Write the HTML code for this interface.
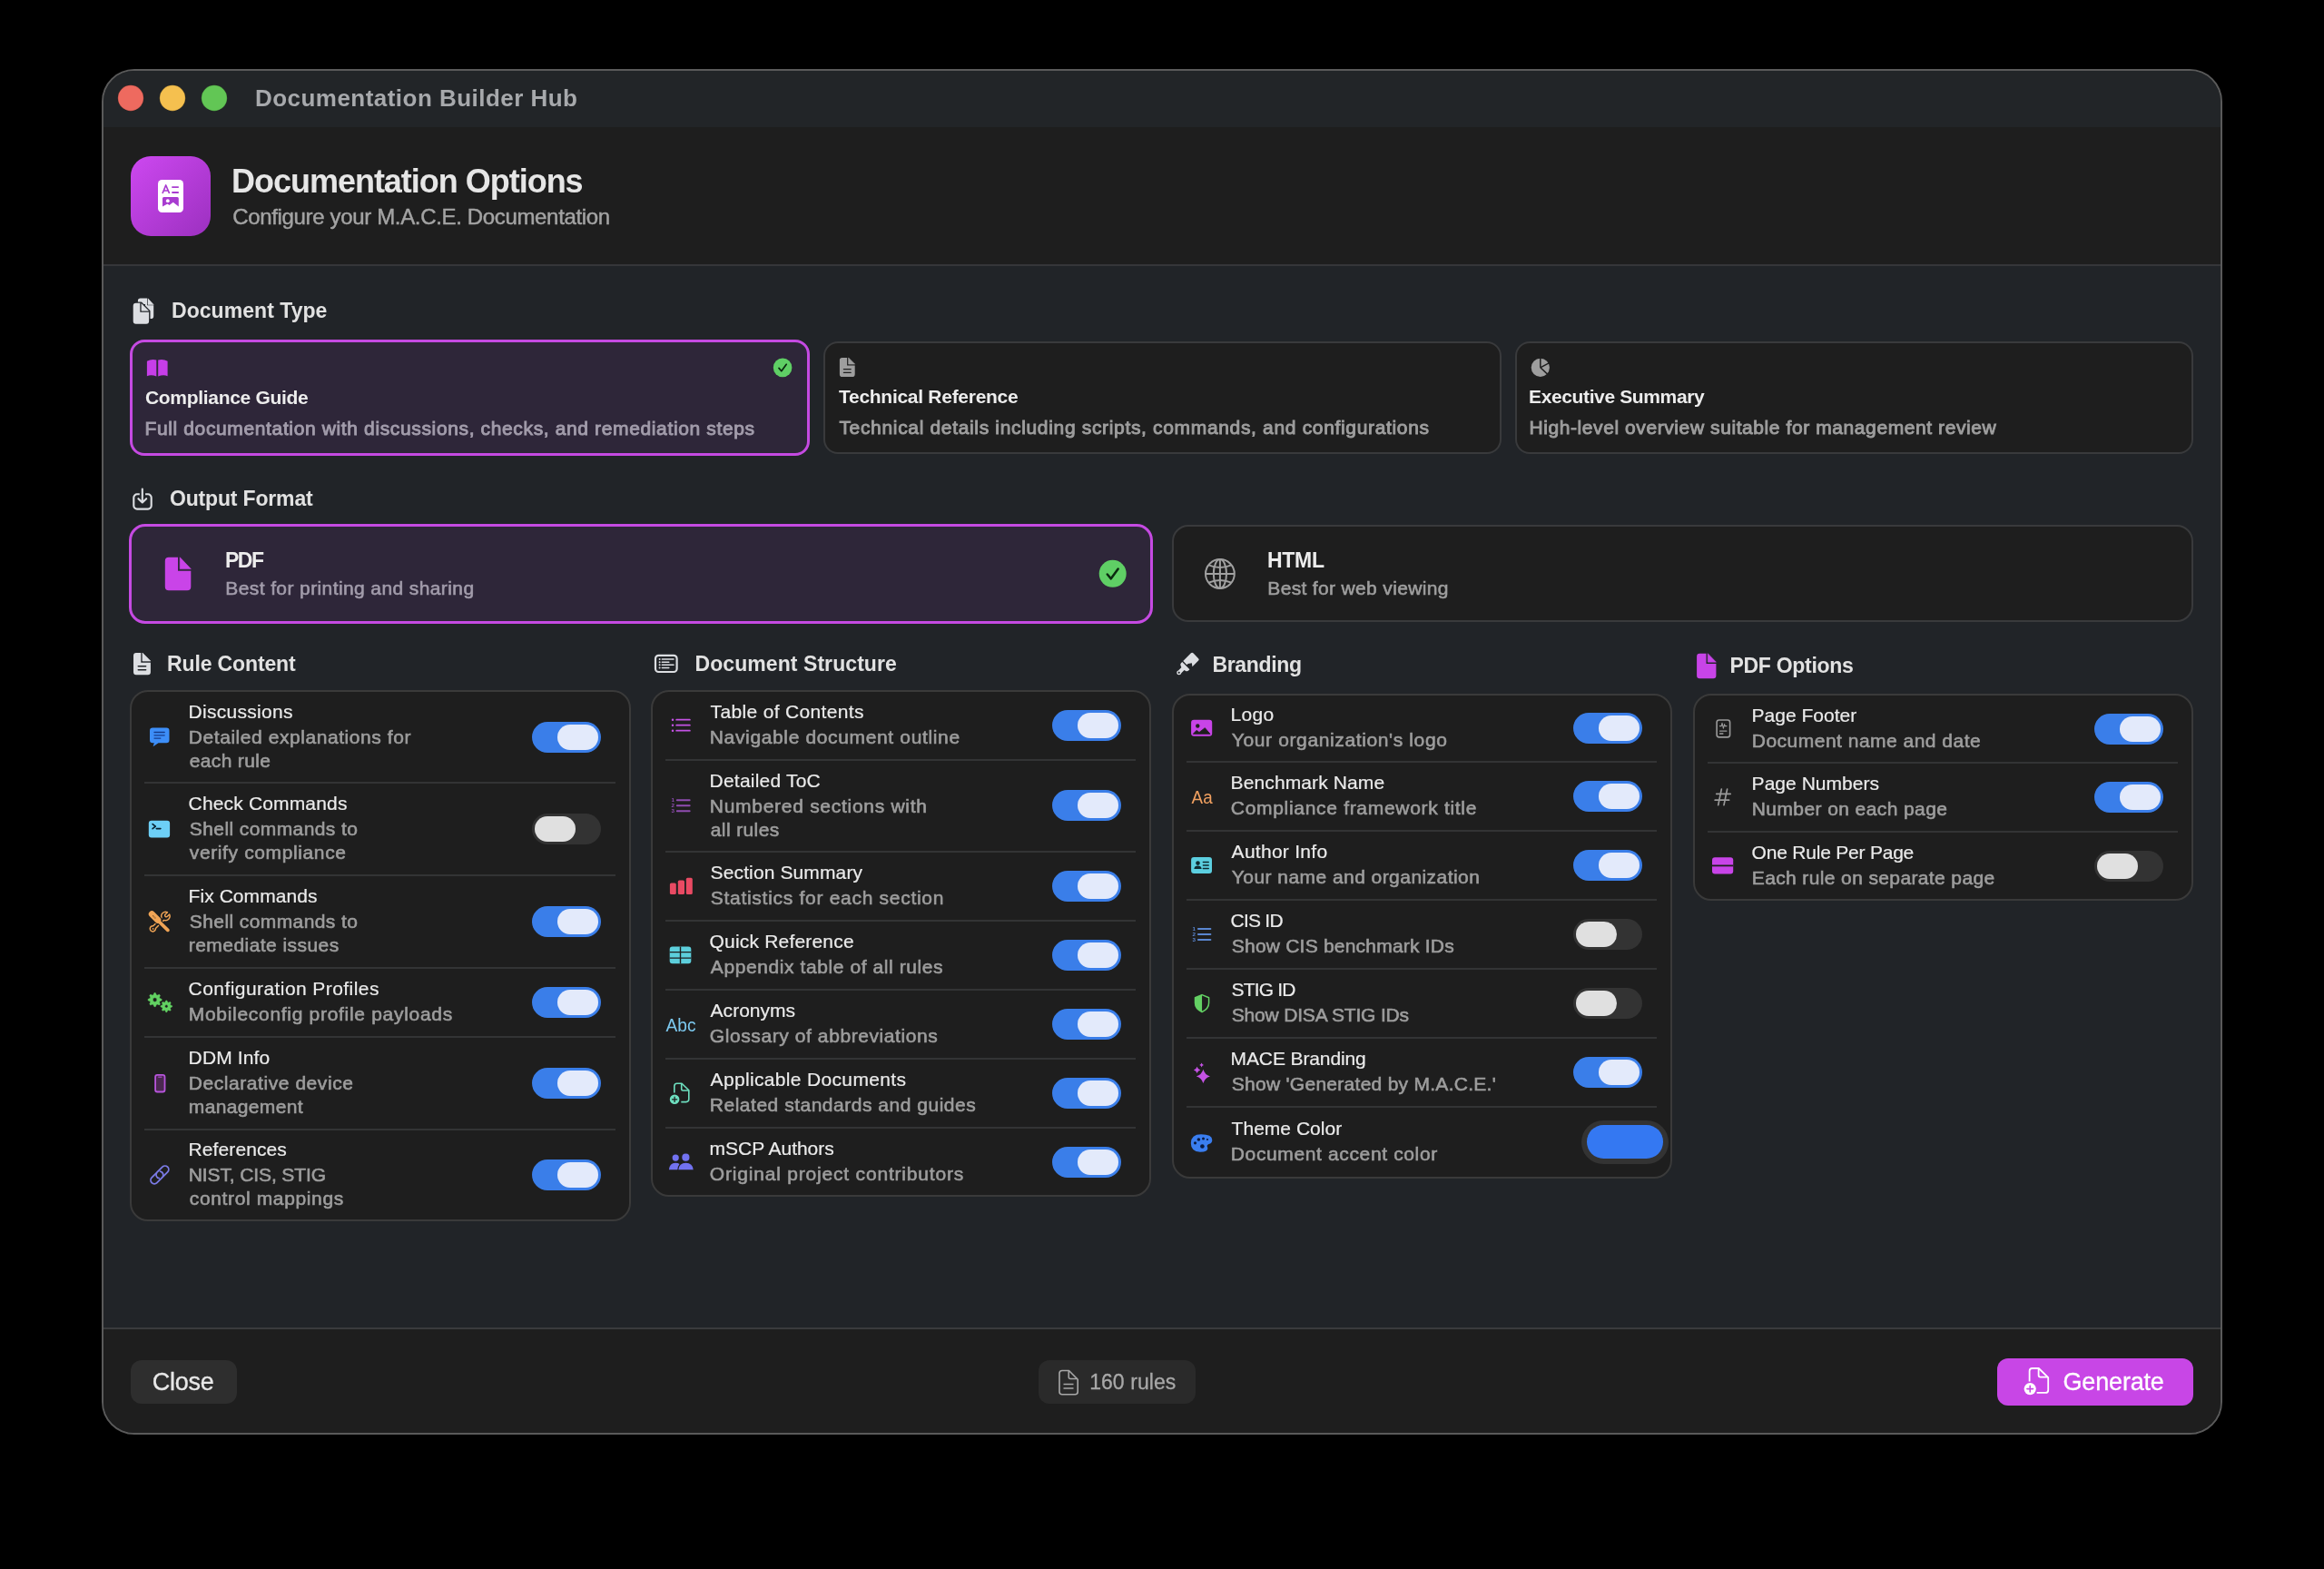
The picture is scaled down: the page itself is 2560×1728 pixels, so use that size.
<!DOCTYPE html>
<html><head><meta charset="utf-8"><style>
html,body{margin:0;padding:0;}
body{width:2560px;height:1728px;background:#000;position:relative;overflow:hidden;font-family:"Liberation Sans", sans-serif;}
.win{position:absolute;border:2px solid #5a5a5a;border-radius:36px;background:#212428;overflow:hidden;}
.b{position:absolute;}
.t{position:absolute;white-space:nowrap;}
#L{position:absolute;left:0;top:0;width:2560px;height:1728px;will-change:transform;}
svg.ov{position:absolute;left:0;top:0;overflow:visible;}
</style></head><body>
<div id="L"><div class="win" style="left:112px;top:76px;width:2332px;height:1500px;"><div class="b" style="left:0;top:0;width:100%;height:62px;background:#222528"></div><div class="b" style="left:0;top:62px;width:100%;height:151px;background:#1e1e1e"></div><div class="b" style="left:0;top:213px;width:100%;height:2px;background:#353639"></div><div class="b" style="left:0;top:1384px;width:100%;height:2px;background:#3a3b3d"></div><div class="b" style="left:0;top:1386px;width:100%;height:200px;background:#1e1e1e"></div></div><div class="t" style="left:281.00px;top:90.99px;font-size:26px;line-height:34px;color:#a7a9ac;font-weight:700;letter-spacing:0.463px;">Documentation Builder Hub</div><div class="t" style="left:255.00px;top:176.03px;font-size:36px;line-height:47px;color:#e6e6e6;font-weight:700;letter-spacing:-1.018px;">Documentation Options</div><div class="t" style="left:256.23px;top:223.18px;font-size:24px;line-height:31px;color:#a3a3a3;font-weight:400;letter-spacing:-0.341px;-webkit-text-stroke:0.45px #a3a3a3;">Configure your M.A.C.E. Documentation</div><div class="t" style="left:189.00px;top:327.03px;font-size:23px;line-height:30px;color:#e2e2e2;font-weight:700;letter-spacing:0.048px;">Document Type</div><div class="t" style="left:187.00px;top:534.03px;font-size:23px;line-height:30px;color:#e2e2e2;font-weight:700;letter-spacing:-0.170px;">Output Format</div><div class="t" style="left:184.00px;top:716.03px;font-size:23px;line-height:30px;color:#e2e2e2;font-weight:700;letter-spacing:-0.131px;">Rule Content</div><div class="t" style="left:765.50px;top:716.03px;font-size:23px;line-height:30px;color:#e2e2e2;font-weight:700;letter-spacing:0.071px;">Document Structure</div><div class="t" style="left:1335.40px;top:717.03px;font-size:23px;line-height:30px;color:#e2e2e2;font-weight:700;letter-spacing:-0.327px;">Branding</div><div class="t" style="left:1905.50px;top:718.03px;font-size:23px;line-height:30px;color:#e2e2e2;font-weight:700;letter-spacing:-0.298px;">PDF Options</div><div class="b" style="left:143px;top:374px;width:749px;height:128px;box-sizing:border-box;border:3px solid #c54ae2;border-radius:16px;background:#2e2639"></div><div class="b" style="left:907px;top:376px;width:747px;height:124px;box-sizing:border-box;border:2px solid #393a3c;border-radius:16px;background:#1e1e1e"></div><div class="b" style="left:1669px;top:376px;width:747px;height:124px;box-sizing:border-box;border:2px solid #393a3c;border-radius:16px;background:#1e1e1e"></div><div class="t" style="left:160.00px;top:424.22px;font-size:21px;line-height:27px;color:#ededed;font-weight:700;letter-spacing:-0.312px;">Compliance Guide</div><div class="t" style="left:159.45px;top:457.62px;font-size:21px;line-height:27px;color:#a29cab;font-weight:400;letter-spacing:0.635px;-webkit-text-stroke:0.9px #a29cab;">Full documentation with discussions, checks, and remediation steps</div><div class="t" style="left:924.00px;top:423.22px;font-size:21px;line-height:27px;color:#ededed;font-weight:700;letter-spacing:-0.279px;">Technical Reference</div><div class="t" style="left:924.45px;top:456.82px;font-size:21px;line-height:27px;color:#9e9e9e;font-weight:400;letter-spacing:0.666px;-webkit-text-stroke:0.9px #9e9e9e;">Technical details including scripts, commands, and configurations</div><div class="t" style="left:1684.00px;top:423.22px;font-size:21px;line-height:27px;color:#ededed;font-weight:700;letter-spacing:-0.370px;">Executive Summary</div><div class="t" style="left:1684.45px;top:456.82px;font-size:21px;line-height:27px;color:#9e9e9e;font-weight:400;letter-spacing:0.586px;-webkit-text-stroke:0.9px #9e9e9e;">High-level overview suitable for management review</div><div class="b" style="left:142px;top:577px;width:1128px;height:110px;box-sizing:border-box;border:3px solid #c54ae2;border-radius:18px;background:#2e2639"></div><div class="b" style="left:1291px;top:578px;width:1125px;height:107px;box-sizing:border-box;border:2px solid #393a3c;border-radius:18px;background:#1e1e1e"></div><div class="t" style="left:248.00px;top:602.03px;font-size:23px;line-height:30px;color:#ededed;font-weight:700;letter-spacing:-1.475px;">PDF</div><div class="t" style="left:248.30px;top:633.72px;font-size:21px;line-height:27px;color:#a29cab;font-weight:400;letter-spacing:0.397px;-webkit-text-stroke:0.6px #a29cab;">Best for printing and sharing</div><div class="t" style="left:1396.00px;top:602.03px;font-size:23px;line-height:30px;color:#ededed;font-weight:700;letter-spacing:-0.273px;">HTML</div><div class="t" style="left:1396.30px;top:634.22px;font-size:21px;line-height:27px;color:#9e9e9e;font-weight:400;letter-spacing:0.342px;-webkit-text-stroke:0.6px #9e9e9e;">Best for web viewing</div><div class="b" style="left:143px;top:760px;width:552px;height:585px;box-sizing:border-box;border:2px solid #3a3a3a;border-radius:20px;background:#1e1e1e"></div><div class="t" style="left:207.60px;top:769.87px;font-size:21px;line-height:27px;color:#ebebeb;font-weight:400;letter-spacing:0.277px;-webkit-text-stroke:0.2px #ebebeb;">Discussions</div><div class="t" style="left:207.80px;top:797.97px;font-size:21px;line-height:27px;color:#9d9d9d;font-weight:400;letter-spacing:0.560px;-webkit-text-stroke:0.6px #9d9d9d;">Detailed explanations for</div><div class="t" style="left:208.80px;top:823.97px;font-size:21px;line-height:27px;color:#9d9d9d;font-weight:400;letter-spacing:0.336px;-webkit-text-stroke:0.6px #9d9d9d;">each rule</div><div class="b" style="left:586px;top:794.5px;width:76px;height:34px;border-radius:17px;background:#3a7ee9"></div><div class="b" style="left:614px;top:797.5px;width:45px;height:28px;border-radius:14px;background:#e3eafb"></div><div class="b" style="left:159px;top:861px;width:519px;height:2px;background:#333435"></div><div class="t" style="left:207.60px;top:871.37px;font-size:21px;line-height:27px;color:#ebebeb;font-weight:400;letter-spacing:0.159px;-webkit-text-stroke:0.2px #ebebeb;">Check Commands</div><div class="t" style="left:208.80px;top:899.47px;font-size:21px;line-height:27px;color:#9d9d9d;font-weight:400;letter-spacing:0.406px;-webkit-text-stroke:0.6px #9d9d9d;">Shell commands to</div><div class="t" style="left:208.80px;top:925.47px;font-size:21px;line-height:27px;color:#9d9d9d;font-weight:400;letter-spacing:0.622px;-webkit-text-stroke:0.6px #9d9d9d;">verify compliance</div><div class="b" style="left:586px;top:896.0px;width:76px;height:34px;border-radius:17px;background:#333333"></div><div class="b" style="left:589px;top:899.0px;width:45px;height:28px;border-radius:14px;background:#e0e0e0"></div><div class="b" style="left:159px;top:963px;width:519px;height:2px;background:#333435"></div><div class="t" style="left:207.60px;top:973.37px;font-size:21px;line-height:27px;color:#ebebeb;font-weight:400;letter-spacing:0.055px;-webkit-text-stroke:0.2px #ebebeb;">Fix Commands</div><div class="t" style="left:208.80px;top:1001.47px;font-size:21px;line-height:27px;color:#9d9d9d;font-weight:400;letter-spacing:0.406px;-webkit-text-stroke:0.6px #9d9d9d;">Shell commands to</div><div class="t" style="left:207.80px;top:1027.47px;font-size:21px;line-height:27px;color:#9d9d9d;font-weight:400;letter-spacing:0.444px;-webkit-text-stroke:0.6px #9d9d9d;">remediate issues</div><div class="b" style="left:586px;top:998.0px;width:76px;height:34px;border-radius:17px;background:#3a7ee9"></div><div class="b" style="left:614px;top:1001.0px;width:45px;height:28px;border-radius:14px;background:#e3eafb"></div><div class="b" style="left:159px;top:1065px;width:519px;height:2px;background:#333435"></div><div class="t" style="left:207.60px;top:1075.37px;font-size:21px;line-height:27px;color:#ebebeb;font-weight:400;letter-spacing:0.430px;-webkit-text-stroke:0.2px #ebebeb;">Configuration Profiles</div><div class="t" style="left:207.80px;top:1103.47px;font-size:21px;line-height:27px;color:#9d9d9d;font-weight:400;letter-spacing:0.699px;-webkit-text-stroke:0.6px #9d9d9d;">Mobileconfig profile payloads</div><div class="b" style="left:586px;top:1087.0px;width:76px;height:34px;border-radius:17px;background:#3a7ee9"></div><div class="b" style="left:614px;top:1090.0px;width:45px;height:28px;border-radius:14px;background:#e3eafb"></div><div class="b" style="left:159px;top:1141px;width:519px;height:2px;background:#333435"></div><div class="t" style="left:207.60px;top:1151.37px;font-size:21px;line-height:27px;color:#ebebeb;font-weight:400;letter-spacing:0.142px;-webkit-text-stroke:0.2px #ebebeb;">DDM Info</div><div class="t" style="left:207.80px;top:1179.47px;font-size:21px;line-height:27px;color:#9d9d9d;font-weight:400;letter-spacing:0.559px;-webkit-text-stroke:0.6px #9d9d9d;">Declarative device</div><div class="t" style="left:207.80px;top:1205.47px;font-size:21px;line-height:27px;color:#9d9d9d;font-weight:400;letter-spacing:0.351px;-webkit-text-stroke:0.6px #9d9d9d;">management</div><div class="b" style="left:586px;top:1176.0px;width:76px;height:34px;border-radius:17px;background:#3a7ee9"></div><div class="b" style="left:614px;top:1179.0px;width:45px;height:28px;border-radius:14px;background:#e3eafb"></div><div class="b" style="left:159px;top:1243px;width:519px;height:2px;background:#333435"></div><div class="t" style="left:207.60px;top:1252.37px;font-size:21px;line-height:27px;color:#ebebeb;font-weight:400;letter-spacing:0.090px;-webkit-text-stroke:0.2px #ebebeb;">References</div><div class="t" style="left:207.80px;top:1280.47px;font-size:21px;line-height:27px;color:#9d9d9d;font-weight:400;letter-spacing:-0.116px;-webkit-text-stroke:0.6px #9d9d9d;">NIST, CIS, STIG</div><div class="t" style="left:208.80px;top:1306.47px;font-size:21px;line-height:27px;color:#9d9d9d;font-weight:400;letter-spacing:0.632px;-webkit-text-stroke:0.6px #9d9d9d;">control mappings</div><div class="b" style="left:586px;top:1277.0px;width:76px;height:34px;border-radius:17px;background:#3a7ee9"></div><div class="b" style="left:614px;top:1280.0px;width:45px;height:28px;border-radius:14px;background:#e3eafb"></div><div class="b" style="left:717px;top:760px;width:551px;height:558px;box-sizing:border-box;border:2px solid #3a3a3a;border-radius:20px;background:#1e1e1e"></div><div class="t" style="left:782.60px;top:770.12px;font-size:21px;line-height:27px;color:#ebebeb;font-weight:400;letter-spacing:0.335px;-webkit-text-stroke:0.2px #ebebeb;">Table of Contents</div><div class="t" style="left:781.80px;top:798.22px;font-size:21px;line-height:27px;color:#9d9d9d;font-weight:400;letter-spacing:0.644px;-webkit-text-stroke:0.6px #9d9d9d;">Navigable document outline</div><div class="b" style="left:1159px;top:781.75px;width:76px;height:34px;border-radius:17px;background:#3a7ee9"></div><div class="b" style="left:1187px;top:784.75px;width:45px;height:28px;border-radius:14px;background:#e3eafb"></div><div class="b" style="left:733px;top:835.5px;width:518px;height:2px;background:#333435"></div><div class="t" style="left:781.60px;top:845.62px;font-size:21px;line-height:27px;color:#ebebeb;font-weight:400;letter-spacing:0.203px;-webkit-text-stroke:0.2px #ebebeb;">Detailed ToC</div><div class="t" style="left:781.80px;top:873.72px;font-size:21px;line-height:27px;color:#9d9d9d;font-weight:400;letter-spacing:0.718px;-webkit-text-stroke:0.6px #9d9d9d;">Numbered sections with</div><div class="t" style="left:782.80px;top:899.72px;font-size:21px;line-height:27px;color:#9d9d9d;font-weight:400;letter-spacing:0.380px;-webkit-text-stroke:0.6px #9d9d9d;">all rules</div><div class="b" style="left:1159px;top:870.25px;width:76px;height:34px;border-radius:17px;background:#3a7ee9"></div><div class="b" style="left:1187px;top:873.25px;width:45px;height:28px;border-radius:14px;background:#e3eafb"></div><div class="b" style="left:733px;top:937px;width:518px;height:2px;background:#333435"></div><div class="t" style="left:782.60px;top:947.37px;font-size:21px;line-height:27px;color:#ebebeb;font-weight:400;letter-spacing:0.120px;-webkit-text-stroke:0.2px #ebebeb;">Section Summary</div><div class="t" style="left:782.80px;top:975.47px;font-size:21px;line-height:27px;color:#9d9d9d;font-weight:400;letter-spacing:0.711px;-webkit-text-stroke:0.6px #9d9d9d;">Statistics for each section</div><div class="b" style="left:1159px;top:959.0px;width:76px;height:34px;border-radius:17px;background:#3a7ee9"></div><div class="b" style="left:1187px;top:962.0px;width:45px;height:28px;border-radius:14px;background:#e3eafb"></div><div class="b" style="left:733px;top:1013px;width:518px;height:2px;background:#333435"></div><div class="t" style="left:781.60px;top:1023.37px;font-size:21px;line-height:27px;color:#ebebeb;font-weight:400;letter-spacing:0.184px;-webkit-text-stroke:0.2px #ebebeb;">Quick Reference</div><div class="t" style="left:782.80px;top:1051.47px;font-size:21px;line-height:27px;color:#9d9d9d;font-weight:400;letter-spacing:0.589px;-webkit-text-stroke:0.6px #9d9d9d;">Appendix table of all rules</div><div class="b" style="left:1159px;top:1035.0px;width:76px;height:34px;border-radius:17px;background:#3a7ee9"></div><div class="b" style="left:1187px;top:1038.0px;width:45px;height:28px;border-radius:14px;background:#e3eafb"></div><div class="b" style="left:733px;top:1089px;width:518px;height:2px;background:#333435"></div><div class="t" style="left:782.60px;top:1099.37px;font-size:21px;line-height:27px;color:#ebebeb;font-weight:400;letter-spacing:0.021px;-webkit-text-stroke:0.2px #ebebeb;">Acronyms</div><div class="t" style="left:781.80px;top:1127.47px;font-size:21px;line-height:27px;color:#9d9d9d;font-weight:400;letter-spacing:0.586px;-webkit-text-stroke:0.6px #9d9d9d;">Glossary of abbreviations</div><div class="b" style="left:1159px;top:1111.0px;width:76px;height:34px;border-radius:17px;background:#3a7ee9"></div><div class="b" style="left:1187px;top:1114.0px;width:45px;height:28px;border-radius:14px;background:#e3eafb"></div><div class="b" style="left:733px;top:1165px;width:518px;height:2px;background:#333435"></div><div class="t" style="left:782.60px;top:1175.37px;font-size:21px;line-height:27px;color:#ebebeb;font-weight:400;letter-spacing:0.335px;-webkit-text-stroke:0.2px #ebebeb;">Applicable Documents</div><div class="t" style="left:781.80px;top:1203.47px;font-size:21px;line-height:27px;color:#9d9d9d;font-weight:400;letter-spacing:0.514px;-webkit-text-stroke:0.6px #9d9d9d;">Related standards and guides</div><div class="b" style="left:1159px;top:1187.0px;width:76px;height:34px;border-radius:17px;background:#3a7ee9"></div><div class="b" style="left:1187px;top:1190.0px;width:45px;height:28px;border-radius:14px;background:#e3eafb"></div><div class="b" style="left:733px;top:1241px;width:518px;height:2px;background:#333435"></div><div class="t" style="left:781.60px;top:1250.87px;font-size:21px;line-height:27px;color:#ebebeb;font-weight:400;letter-spacing:-0.016px;-webkit-text-stroke:0.2px #ebebeb;">mSCP Authors</div><div class="t" style="left:781.80px;top:1278.97px;font-size:21px;line-height:27px;color:#9d9d9d;font-weight:400;letter-spacing:0.808px;-webkit-text-stroke:0.6px #9d9d9d;">Original project contributors</div><div class="b" style="left:1159px;top:1262.5px;width:76px;height:34px;border-radius:17px;background:#3a7ee9"></div><div class="b" style="left:1187px;top:1265.5px;width:45px;height:28px;border-radius:14px;background:#e3eafb"></div><div class="b" style="left:1291px;top:763.5px;width:551px;height:534.5px;box-sizing:border-box;border:2px solid #3a3a3a;border-radius:20px;background:#1e1e1e"></div><div class="t" style="left:1355.60px;top:773.12px;font-size:21px;line-height:27px;color:#ebebeb;font-weight:400;letter-spacing:0.254px;-webkit-text-stroke:0.2px #ebebeb;">Logo</div><div class="t" style="left:1356.80px;top:801.22px;font-size:21px;line-height:27px;color:#9d9d9d;font-weight:400;letter-spacing:0.624px;-webkit-text-stroke:0.6px #9d9d9d;">Your organization's logo</div><div class="b" style="left:1733px;top:784.75px;width:76px;height:34px;border-radius:17px;background:#3a7ee9"></div><div class="b" style="left:1761px;top:787.75px;width:45px;height:28px;border-radius:14px;background:#e3eafb"></div><div class="b" style="left:1307px;top:838px;width:518px;height:2px;background:#333435"></div><div class="t" style="left:1355.60px;top:848.37px;font-size:21px;line-height:27px;color:#ebebeb;font-weight:400;letter-spacing:0.109px;-webkit-text-stroke:0.2px #ebebeb;">Benchmark Name</div><div class="t" style="left:1355.80px;top:876.47px;font-size:21px;line-height:27px;color:#9d9d9d;font-weight:400;letter-spacing:0.693px;-webkit-text-stroke:0.6px #9d9d9d;">Compliance framework title</div><div class="b" style="left:1733px;top:860.0px;width:76px;height:34px;border-radius:17px;background:#3a7ee9"></div><div class="b" style="left:1761px;top:863.0px;width:45px;height:28px;border-radius:14px;background:#e3eafb"></div><div class="b" style="left:1307px;top:914px;width:518px;height:2px;background:#333435"></div><div class="t" style="left:1356.60px;top:924.37px;font-size:21px;line-height:27px;color:#ebebeb;font-weight:400;letter-spacing:0.275px;-webkit-text-stroke:0.2px #ebebeb;">Author Info</div><div class="t" style="left:1356.80px;top:952.47px;font-size:21px;line-height:27px;color:#9d9d9d;font-weight:400;letter-spacing:0.447px;-webkit-text-stroke:0.6px #9d9d9d;">Your name and organization</div><div class="b" style="left:1733px;top:936.0px;width:76px;height:34px;border-radius:17px;background:#3a7ee9"></div><div class="b" style="left:1761px;top:939.0px;width:45px;height:28px;border-radius:14px;background:#e3eafb"></div><div class="b" style="left:1307px;top:990px;width:518px;height:2px;background:#333435"></div><div class="t" style="left:1355.60px;top:1000.37px;font-size:21px;line-height:27px;color:#ebebeb;font-weight:400;letter-spacing:-0.775px;-webkit-text-stroke:0.2px #ebebeb;">CIS ID</div><div class="t" style="left:1356.80px;top:1028.47px;font-size:21px;line-height:27px;color:#9d9d9d;font-weight:400;letter-spacing:0.213px;-webkit-text-stroke:0.6px #9d9d9d;">Show CIS benchmark IDs</div><div class="b" style="left:1733px;top:1012.0px;width:76px;height:34px;border-radius:17px;background:#333333"></div><div class="b" style="left:1736px;top:1015.0px;width:45px;height:28px;border-radius:14px;background:#e0e0e0"></div><div class="b" style="left:1307px;top:1066px;width:518px;height:2px;background:#333435"></div><div class="t" style="left:1356.60px;top:1076.37px;font-size:21px;line-height:27px;color:#ebebeb;font-weight:400;letter-spacing:-0.845px;-webkit-text-stroke:0.2px #ebebeb;">STIG ID</div><div class="t" style="left:1356.80px;top:1104.47px;font-size:21px;line-height:27px;color:#9d9d9d;font-weight:400;letter-spacing:-0.185px;-webkit-text-stroke:0.6px #9d9d9d;">Show DISA STIG IDs</div><div class="b" style="left:1733px;top:1088.0px;width:76px;height:34px;border-radius:17px;background:#333333"></div><div class="b" style="left:1736px;top:1091.0px;width:45px;height:28px;border-radius:14px;background:#e0e0e0"></div><div class="b" style="left:1307px;top:1142px;width:518px;height:2px;background:#333435"></div><div class="t" style="left:1355.60px;top:1152.37px;font-size:21px;line-height:27px;color:#ebebeb;font-weight:400;letter-spacing:-0.116px;-webkit-text-stroke:0.2px #ebebeb;">MACE Branding</div><div class="t" style="left:1356.80px;top:1180.47px;font-size:21px;line-height:27px;color:#9d9d9d;font-weight:400;letter-spacing:0.275px;-webkit-text-stroke:0.6px #9d9d9d;">Show 'Generated by M.A.C.E.'</div><div class="b" style="left:1733px;top:1164.0px;width:76px;height:34px;border-radius:17px;background:#3a7ee9"></div><div class="b" style="left:1761px;top:1167.0px;width:45px;height:28px;border-radius:14px;background:#e3eafb"></div><div class="b" style="left:1307px;top:1218px;width:518px;height:2px;background:#333435"></div><div class="t" style="left:1356.60px;top:1229.37px;font-size:21px;line-height:27px;color:#ebebeb;font-weight:400;letter-spacing:0.022px;-webkit-text-stroke:0.2px #ebebeb;">Theme Color</div><div class="t" style="left:1355.80px;top:1257.47px;font-size:21px;line-height:27px;color:#9d9d9d;font-weight:400;letter-spacing:0.631px;-webkit-text-stroke:0.6px #9d9d9d;">Document accent color</div><div class="b" style="left:1742.4px;top:1234.0px;width:95.2px;height:47.7px;border-radius:24px;background:#333333"></div><div class="b" style="left:1747.8px;top:1239.4px;width:83.9px;height:36.6px;border-radius:18.3px;background:#3478f2"></div><div class="b" style="left:1865px;top:764px;width:551px;height:228px;box-sizing:border-box;border:2px solid #3a3a3a;border-radius:20px;background:#1e1e1e"></div><div class="t" style="left:1929.60px;top:773.87px;font-size:21px;line-height:27px;color:#ebebeb;font-weight:400;letter-spacing:0.002px;-webkit-text-stroke:0.2px #ebebeb;">Page Footer</div><div class="t" style="left:1929.80px;top:801.97px;font-size:21px;line-height:27px;color:#9d9d9d;font-weight:400;letter-spacing:0.487px;-webkit-text-stroke:0.6px #9d9d9d;">Document name and date</div><div class="b" style="left:2307px;top:785.5px;width:76px;height:34px;border-radius:17px;background:#3a7ee9"></div><div class="b" style="left:2335px;top:788.5px;width:45px;height:28px;border-radius:14px;background:#e3eafb"></div><div class="b" style="left:1881px;top:839px;width:518px;height:2px;background:#333435"></div><div class="t" style="left:1929.60px;top:849.37px;font-size:21px;line-height:27px;color:#ebebeb;font-weight:400;letter-spacing:0.039px;-webkit-text-stroke:0.2px #ebebeb;">Page Numbers</div><div class="t" style="left:1929.80px;top:877.47px;font-size:21px;line-height:27px;color:#9d9d9d;font-weight:400;letter-spacing:0.410px;-webkit-text-stroke:0.6px #9d9d9d;">Number on each page</div><div class="b" style="left:2307px;top:861.0px;width:76px;height:34px;border-radius:17px;background:#3a7ee9"></div><div class="b" style="left:2335px;top:864.0px;width:45px;height:28px;border-radius:14px;background:#e3eafb"></div><div class="b" style="left:1881px;top:915px;width:518px;height:2px;background:#333435"></div><div class="t" style="left:1929.60px;top:924.87px;font-size:21px;line-height:27px;color:#ebebeb;font-weight:400;letter-spacing:-0.214px;-webkit-text-stroke:0.2px #ebebeb;">One Rule Per Page</div><div class="t" style="left:1929.80px;top:952.97px;font-size:21px;line-height:27px;color:#9d9d9d;font-weight:400;letter-spacing:0.374px;-webkit-text-stroke:0.6px #9d9d9d;">Each rule on separate page</div><div class="b" style="left:2307px;top:936.5px;width:76px;height:34px;border-radius:17px;background:#333333"></div><div class="b" style="left:2310px;top:939.5px;width:45px;height:28px;border-radius:14px;background:#e0e0e0"></div><div class="b" style="left:144px;top:1498px;width:117px;height:48px;border-radius:12px;background:#2e2e2e"></div><div class="t" style="left:167.85px;top:1505.14px;font-size:27px;line-height:35px;color:#e8e8e8;font-weight:400;letter-spacing:-0.253px;-webkit-text-stroke:0.3px #e8e8e8;">Close</div><div class="b" style="left:1144px;top:1498px;width:173px;height:48px;border-radius:12px;background:#2a2a2a"></div><div class="t" style="left:1200.15px;top:1507.03px;font-size:23px;line-height:30px;color:#a8a8a8;font-weight:400;letter-spacing:0.073px;-webkit-text-stroke:0.3px #a8a8a8;">160 rules</div><div class="b" style="left:2200px;top:1496px;width:216px;height:52px;border-radius:12px;background:#c846e6"></div><div class="t" style="left:2272.55px;top:1505.14px;font-size:27px;line-height:35px;color:#ffffff;font-weight:400;letter-spacing:-0.180px;-webkit-text-stroke:0.3px #ffffff;">Generate</div></div>
<svg class="ov" width="2560" height="1728" viewBox="0 0 2560 1728"><circle cx="144" cy="108" r="14.2" fill="#ee6a5f" stroke="rgba(0,0,0,0.25)" stroke-width="0.8"/><circle cx="190" cy="108" r="14.2" fill="#f5c04f" stroke="rgba(0,0,0,0.25)" stroke-width="0.8"/><circle cx="236" cy="108" r="14.2" fill="#62c655" stroke="rgba(0,0,0,0.25)" stroke-width="0.8"/><defs><linearGradient id="ag" x1="0" y1="0" x2="1" y2="1"><stop offset="0" stop-color="#cd48f0"/><stop offset="1" stop-color="#9c30c0"/></linearGradient></defs><rect x="144" y="172" width="88" height="88" rx="22" fill="url(#ag)"/><rect x="174" y="198" width="28" height="36" rx="4.5" fill="#fff"/><path d="M179 213 L182.7 204 L186.6 213 M180.3 210 H185.2" stroke="#a83cd0" stroke-width="1.7" fill="none" stroke-linejoin="round"/><path d="M189.3 206.2 H196.8 M189.3 212 H196.8" stroke="#a83cd0" stroke-width="1.8"/><path d="M179 218.5 Q179 217 180.5 217 H195.3 Q196.8 217 196.8 218.5 V227.6 L190.7 222.8 L186.5 226 L184.5 224.5 L179 227.6 Z" fill="#a83cd0"/><circle cx="184.8" cy="221.2" r="1.9" fill="#fff"/><path d="M154.7,328.6 H162.1 V336.3 H169.2 V348.2 A2.8,2.8 0 0 1 166.4,351 H160 V335 H151.9 V331.4 A2.8,2.8 0 0 1 154.7,328.6 Z" fill="#dcdee2"/><path d="M163,328.8 L169.2,335.5 H163 Z" fill="#dcdee2" stroke="#dcdee2" stroke-width="0.5" stroke-linejoin="round"/><path d="M149.7,333.8 H155.2 L164.1,342.8 V353.7 A3,3 0 0 1 161.1,356.7 H149.7 A3,3 0 0 1 146.7,353.7 V336.8 A3,3 0 0 1 149.7,333.8 Z" fill="#212428" stroke="#212428" stroke-width="2.8" stroke-linejoin="round"/><path d="M149.7,333.8 H154.3 V343.8 H164.1 V353.7 A3,3 0 0 1 161.1,356.7 H149.7 A3,3 0 0 1 146.7,353.7 V336.8 A3,3 0 0 1 149.7,333.8 Z" fill="#dcdee2"/><path d="M155.9,334.6 L163.6,342.3 H155.9 Z" fill="#dcdee2" stroke="#dcdee2" stroke-width="0.5" stroke-linejoin="round"/><path d="M153.8,544.3 H151 A3.7,3.7 0 0 0 147.3,548 V556.9 A3.7,3.7 0 0 0 151,560.6 H163 A3.7,3.7 0 0 0 166.7,556.9 V548 A3.7,3.7 0 0 0 163,544.3 H160.1" fill="none" stroke="#dcdee2" stroke-width="2.1"/><path d="M156.8,538.5 V553 M152.4,549.2 L156.8,553.5 L161.2,549.2" fill="none" stroke="#dcdee2" stroke-width="2.1" stroke-linecap="round" stroke-linejoin="round"/><path d="M150,719.1 H155.3 V729.7 H165.9 V740.2 A3,3 0 0 1 162.9,743.2 H150 A3,3 0 0 1 147,740.2 V722.1 A3,3 0 0 1 150,719.1 Z" fill="#dcdee2"/><path d="M156.95000000000002,719.1 L165.9,728.0500000000001 H156.95000000000002 Z" fill="#dcdee2" stroke="#dcdee2" stroke-width="0.6" stroke-linejoin="round"/><path d="M152.3,733.8 H160.6" stroke="#212428" stroke-width="1.6" stroke-linecap="round"/><path d="M152.3,737.7 H160.6" stroke="#212428" stroke-width="1.6" stroke-linecap="round"/><rect x="722" y="721.8" width="23.6" height="18.2" rx="3.6" fill="none" stroke="#dcdee2" stroke-width="2.2"/><circle cx="726.6" cy="726" r="1" fill="#dcdee2"/><path d="M729.3,726 H742" stroke="#dcdee2" stroke-width="1.5" stroke-linecap="round"/><circle cx="726.6" cy="729.2" r="1" fill="#dcdee2"/><path d="M729.3,729.2 H736.8" stroke="#dcdee2" stroke-width="1.5" stroke-linecap="round"/><circle cx="726.6" cy="732.3" r="1" fill="#dcdee2"/><path d="M729.3,732.3 H742" stroke="#dcdee2" stroke-width="1.5" stroke-linecap="round"/><circle cx="726.6" cy="735.6" r="1" fill="#dcdee2"/><path d="M729.3,735.6 H736.8" stroke="#dcdee2" stroke-width="1.5" stroke-linecap="round"/><g transform="translate(1306.5,733) rotate(45)"><path d="M-5.8,-13.5 Q-5.8,-15.2 -4.1,-15.2 H4.1 Q5.8,-15.2 5.8,-13.5 V-4 L2.5,-6.5 L0,-3 V-1.2 H-5.8 Z" fill="#dcdee2"/><path d="M-5.8,0.2 H5.8 V2 Q5.8,4 3.5,4.6 L2.2,5 V9.5 A2.6,2.6 0 1 1 -2.2,9.5 V5 L-3.5,4.6 Q-5.8,4 -5.8,2 Z" fill="#dcdee2"/><circle cx="0" cy="11" r="1.1" fill="#212428"/></g><path d="M1296.5,722.4 L1305.3,731.3" stroke="none"/><path d="M1872.3,719.7 H1879.5 V730.9 H1890.4 V744.0 A3.2,3.2 0 0 1 1887.2,747.2 H1872.3 A3.2,3.2 0 0 1 1869.1,744.0 V722.9000000000001 A3.2,3.2 0 0 1 1872.3,719.7 Z" fill="#c844e8"/><path d="M1881.2,719.7 L1890.4,729.1999999999999 H1881.2 Z" fill="#c844e8" stroke="#c844e8" stroke-width="0.6" stroke-linejoin="round"/><path d="M161.9,397.8 Q166.5,395 172.3,396.4 V414.5 Q166.5,412.2 161.9,414.2 Z" fill="#c63ee8"/><path d="M184.6,397.8 Q180,395 174.2,396.4 V414.5 Q180,412.2 184.6,414.2 Z" fill="#c63ee8"/><circle cx="862.1" cy="404.9" r="10.3" fill="#5fcf65"/><path d="M858.0,405.4 L860.8000000000001,408.7 L866.2,401.29999999999995" fill="none" stroke="#0b2a10" stroke-width="1.75" stroke-linecap="round" stroke-linejoin="round"/><path d="M927.6999999999999,393.9 H933.1 V402.6 H941.7 V412.3 A2.8,2.8 0 0 1 938.9000000000001,415.1 H927.6999999999999 A2.8,2.8 0 0 1 924.9,412.3 V396.7 A2.8,2.8 0 0 1 927.6999999999999,393.9 Z" fill="#9e9e9e"/><path d="M934.6,393.9 L941.7,401.1 H934.6 Z" fill="#9e9e9e" stroke="#9e9e9e" stroke-width="0.6" stroke-linejoin="round"/><path d="M929.4,406.6 H937.2" stroke="#1e1e1e" stroke-width="1.3" stroke-linecap="round"/><path d="M929.4,410.3 H937.2" stroke="#1e1e1e" stroke-width="1.3" stroke-linecap="round"/><circle cx="1696.8" cy="404.8" r="10.1" fill="#9e9e9e"/><path d="M1696.80,404.80 L1696.80,393.70" stroke="#1e1e1e" stroke-width="1.5"/><path d="M1696.80,404.80 L1706.60,399.59" stroke="#1e1e1e" stroke-width="1.5"/><path d="M1696.80,404.80 L1704.92,412.37" stroke="#1e1e1e" stroke-width="1.5"/><path d="M185.8,613.8 H196 V628.8 H210.3 V646.3 A4,4 0 0 1 206.3,650.3 H185.8 A4,4 0 0 1 181.8,646.3 V617.8 A4,4 0 0 1 185.8,613.8 Z" fill="#c944e8"/><path d="M198.2,613.8 L210.3,626.5999999999999 H198.2 Z" fill="#c944e8" stroke="#c944e8" stroke-width="0.6" stroke-linejoin="round"/><circle cx="1225.7" cy="631.8" r="15" fill="#5fcf65"/><path d="M1219.755,632.525 L1223.815,637.31 L1231.645,626.5799999999999" fill="none" stroke="#0b2a10" stroke-width="2.5375" stroke-linecap="round" stroke-linejoin="round"/><g fill="none" stroke="#a0a0a0" stroke-width="2"><circle cx="1343.9" cy="632" r="15.9"/><ellipse cx="1343.9" cy="632" rx="7.1" ry="15.9"/><path d="M1343.9,616.1 V647.9 M1328,632 H1359.8"/><path d="M1331.5,622.3 Q1343.9,627.5 1356.3,622.3 M1331.5,641.7 Q1343.9,636.5 1356.3,641.7"/></g><path d="M168.2,801.6 H183.3 A3.2,3.2 0 0 1 186.5,804.8 V815.0 A3.2,3.2 0 0 1 183.3,818.2 H174.5 L168.6,822.3 L169.8,818.2 H168.2 A3.2,3.2 0 0 1 165,815.0 V804.8 A3.2,3.2 0 0 1 168.2,801.6 Z" fill="#3d8ef8"/><path d="M170,806.5 H181.2 M170,809.8 H181.2 M170,813.1 H176.8" stroke="#173c8c" stroke-width="1.3" stroke-linecap="round"/><rect x="163.8" y="903.8" width="23.3" height="18.6" rx="3" fill="#6dcff6"/><path d="M168.1,907.6 L171.3,910.2 L168.1,912.7 M172.3,912.6 H176.9" fill="none" stroke="#08202e" stroke-width="1.6" stroke-linecap="round" stroke-linejoin="round"/><g transform="translate(0,0.0)"><path transform="translate(182.4,1009) rotate(135.5)" d="M4.3,-1.9 H17.25 A3.1,3.1 0 1 1 17.25,1.9 H4.3 A4.7,4.7 0 0 1 -4.42,1.6 H-1.2 A1.6,1.6 0 0 0 -1.2,-1.6 H-4.42 A4.7,4.7 0 0 1 4.3,-1.9 Z" fill="none" stroke="#f0a455" stroke-width="1.45" stroke-linejoin="round"/><circle cx="168.6" cy="1022.9" r="0.95" fill="#f0a455"/><path d="M167.3,1006.8 L173.8,1013.3" stroke="#1e1e1e" stroke-width="9.4" stroke-linecap="round"/><path d="M175,1014.8 L184.8,1024.4" stroke="#1e1e1e" stroke-width="6" stroke-linecap="round"/><path d="M167.3,1006.8 L173.8,1013.3" stroke="#f0a455" stroke-width="7" stroke-linecap="round"/><path d="M174.5,1014.3 L184.8,1024.4" stroke="#f0a455" stroke-width="3.7" stroke-linecap="round"/><path d="M168.4,1008.4 L171.4,1011.4" stroke="#5a3a18" stroke-width="1.1" stroke-dasharray="0.9 0.7"/></g><path d="M178.17,1100.44 L178.17,1101.76 L175.94,1102.79 L175.57,1103.68 L176.42,1105.99 L175.49,1106.92 L173.18,1106.07 L172.29,1106.44 L171.26,1108.67 L169.94,1108.67 L168.91,1106.44 L168.02,1106.07 L165.71,1106.92 L164.78,1105.99 L165.63,1103.68 L165.26,1102.79 L163.03,1101.76 L163.03,1100.44 L165.26,1099.41 L165.63,1098.52 L164.78,1096.21 L165.71,1095.28 L168.02,1096.13 L168.91,1095.76 L169.94,1093.53 L171.26,1093.53 L172.29,1095.76 L173.18,1096.13 L175.49,1095.28 L176.42,1096.21 L175.57,1098.52 L175.94,1099.41 Z M172.9,1101.1 A2.3,2.3 0 1 0 168.29999999999998,1101.1 A2.3,2.3 0 1 0 172.9,1101.1 Z" fill="#62d262" fill-rule="evenodd" stroke="#62d262" stroke-width="0.5" stroke-linejoin="round"/><path d="M189.68,1107.75 L189.68,1108.85 L187.78,1109.72 L187.47,1110.47 L188.20,1112.42 L187.42,1113.20 L185.47,1112.47 L184.72,1112.78 L183.85,1114.68 L182.75,1114.68 L181.88,1112.78 L181.13,1112.47 L179.18,1113.20 L178.40,1112.42 L179.13,1110.47 L178.82,1109.72 L176.92,1108.85 L176.92,1107.75 L178.82,1106.88 L179.13,1106.13 L178.40,1104.18 L179.18,1103.40 L181.13,1104.13 L181.88,1103.82 L182.75,1101.92 L183.85,1101.92 L184.72,1103.82 L185.47,1104.13 L187.42,1103.40 L188.20,1104.18 L187.47,1106.13 L187.78,1106.88 Z M185.0,1108.3 A1.7,1.7 0 1 0 181.60000000000002,1108.3 A1.7,1.7 0 1 0 185.0,1108.3 Z" fill="#62d262" fill-rule="evenodd" stroke="#62d262" stroke-width="0.5" stroke-linejoin="round"/><rect x="171.1" y="1183.9" width="10.4" height="18.6" rx="2.3" fill="#4a2850" stroke="#b855dc" stroke-width="1.8"/><path d="M174.6,1186.2 H178" stroke="#b855dc" stroke-width="1" stroke-linecap="round"/><g transform="translate(175.9,1293.9) rotate(-45)" fill="none" stroke="#7b7be6" stroke-width="1.8" stroke-linecap="round"><path d="M-1.5,-4 H-8.3 A4,4 0 0 0 -8.3,4 H0.5 A4,4 0 0 0 3.2,-2.2"/><path d="M1.5,4 H8.3 A4,4 0 0 0 8.3,-4 H-0.5 A4,4 0 0 0 -3.2,2.2"/></g><circle cx="741" cy="792.65" r="1.25" fill="#c452e4"/><path d="M745.2,792.65 H759.8" stroke="#c452e4" stroke-width="1.9" stroke-linecap="round"/><circle cx="741" cy="798.65" r="1.25" fill="#c452e4"/><path d="M745.2,798.65 H759.8" stroke="#c452e4" stroke-width="1.9" stroke-linecap="round"/><circle cx="741" cy="804.65" r="1.25" fill="#c452e4"/><path d="M745.2,804.65 H759.8" stroke="#c452e4" stroke-width="1.9" stroke-linecap="round"/><path d="M745.8,881.25 H759.7" stroke="#8f4cb0" stroke-width="1.9" stroke-linecap="round"/><text x="739.6" y="883.35" font-family="Liberation Sans" font-weight="700" font-size="6.2" fill="#8f4cb0">1</text><path d="M745.8,887.25 H759.7" stroke="#8f4cb0" stroke-width="1.9" stroke-linecap="round"/><text x="739.6" y="889.35" font-family="Liberation Sans" font-weight="700" font-size="6.2" fill="#8f4cb0">2</text><path d="M745.8,893.25 H759.7" stroke="#8f4cb0" stroke-width="1.9" stroke-linecap="round"/><text x="739.6" y="895.35" font-family="Liberation Sans" font-weight="700" font-size="6.2" fill="#8f4cb0">3</text><rect x="737.9" y="972.4" width="6.899999999999977" height="12.700000000000045" rx="1.6" fill="#e94a63"/><rect x="746.8" y="969.6" width="7.2000000000000455" height="15.5" rx="1.6" fill="#e94a63"/><rect x="755.8" y="966.8" width="7.0" height="18.300000000000068" rx="1.6" fill="#e94a63"/><rect x="737.7" y="1042.5" width="23.6" height="18.8" rx="3" fill="#5ccfdc"/><path d="M749.5,1042.5 V1061.3 M737.7,1048.6 H761.3 M737.7,1055.1 H761.3" stroke="#1e1e1e" stroke-width="1.4"/><text x="733.6" y="1135.9" font-family="Liberation Sans" font-size="19.6" fill="#7cc8ee" textLength="33" lengthAdjust="spacingAndGlyphs">Abc</text><path d="M742.8,1203.6 V1196.2 A3,3 0 0 1 745.8,1193.2 H751.0 L758.8,1200.8 V1210.6 A3,3 0 0 1 755.8,1213.6 H750.3" fill="none" stroke="#6ee0c0" stroke-width="1.6" stroke-linejoin="round"/><path d="M750.6999999999999,1193.7 V1199.5 A1.5,1.5 0 0 0 752.1999999999999,1201.0 H758.5" fill="none" stroke="#6ee0c0" stroke-width="1.6"/><circle cx="743.0999999999999" cy="1210.8" r="5.3" fill="#6ee0c0"/><path d="M743.0999999999999,1208.2 V1213.4 M740.5,1210.8 H745.6999999999999" stroke="#1e1e1e" stroke-width="1.3" stroke-linecap="round"/><circle cx="744.2" cy="1275.1" r="3.6" fill="#7272f0"/><path d="M736.9,1288.3 Q737.5,1280.7 744,1280.7 Q747,1280.7 748.5,1282.0 Q746.5,1284.5 746.3,1288.3 Z" fill="#7272f0"/><circle cx="755.4" cy="1274.7" r="4.1" fill="#7272f0"/><path d="M747.3,1288.3 Q748,1280.7 755.5,1280.7 Q763,1280.7 763.7,1288.3 Z" fill="#7272f0" stroke="#1e1e1e" stroke-width="0"/><rect x="1312.1" y="792.65" width="23.1" height="18.2" rx="3" fill="#c844e8"/><circle cx="1319.3" cy="799.45" r="2.2" fill="#1e1e1e"/><path d="M1314.3,808.35 L1318.1,804.35 L1321,806.55 L1327.3,801.65 L1333,808.35 Z" fill="#1e1e1e" stroke="#1e1e1e" stroke-width="0.8" stroke-linejoin="round"/><text x="1312.6" y="884.8" font-family="Liberation Sans" font-size="20" fill="#f0a060" textLength="23" lengthAdjust="spacingAndGlyphs">Aa</text><rect x="1312.1" y="944.0" width="22.9" height="18" rx="3" fill="#5ccfe0"/><circle cx="1319.5" cy="950.6" r="2.3" fill="#0e2a30"/><path d="M1315.3,957.0 Q1315.8,953.6 1319.5,953.6 Q1323.2,953.6 1323.7,957.0 Z" fill="#0e2a30"/><path d="M1325.3,949.5 H1331.3 M1325.3,953.0 H1331.3 M1325.3,956.5 H1331.3" stroke="#0e2a30" stroke-width="1.3" stroke-linecap="round"/><path d="M1319.9,1023.0 H1333.4" stroke="#5a86d0" stroke-width="1.9" stroke-linecap="round"/><text x="1313.4" y="1025.1" font-family="Liberation Sans" font-weight="700" font-size="6.2" fill="#5a86d0">1</text><path d="M1319.9,1029.0 H1333.4" stroke="#5a86d0" stroke-width="1.9" stroke-linecap="round"/><text x="1313.4" y="1031.1" font-family="Liberation Sans" font-weight="700" font-size="6.2" fill="#5a86d0">2</text><path d="M1319.9,1035.0 H1333.4" stroke="#5a86d0" stroke-width="1.9" stroke-linecap="round"/><text x="1313.4" y="1037.1" font-family="Liberation Sans" font-weight="700" font-size="6.2" fill="#5a86d0">3</text><path d="M1324.05,1095.6 L1331.6,1098.8 V1104.5 Q1331.6,1111.0 1324.05,1114.5 Q1316.5,1111.0 1316.5,1104.5 V1098.8 Z" fill="none" stroke="#63d063" stroke-width="1.5" stroke-linejoin="round"/><path d="M1324.05,1095.6 V1114.5 Q1316.5,1111.0 1316.5,1104.5 V1098.8 Z" fill="#63d063"/><path d="M1325.4,1177.8000000000002 Q1327.0720000000001,1183.728 1333.0,1185.4 Q1327.0720000000001,1187.0720000000001 1325.4,1193.0 Q1323.728,1187.0720000000001 1317.8000000000002,1185.4 Q1323.728,1183.728 1325.4,1177.8000000000002 Z" fill="#c452e4"/><path d="M1318.6,1174.7 Q1319.414,1177.586 1322.3,1178.4 Q1319.414,1179.2140000000002 1318.6,1182.1000000000001 Q1317.7859999999998,1179.2140000000002 1314.8999999999999,1178.4 Q1317.7859999999998,1177.586 1318.6,1174.7 Z" fill="#c452e4"/><path d="M1323.6,1170.6 Q1324.128,1172.472 1326.0,1173.0 Q1324.128,1173.528 1323.6,1175.4 Q1323.072,1173.528 1321.1999999999998,1173.0 Q1323.072,1172.472 1323.6,1170.6 Z" fill="#c452e4"/><path d="M1323,1249.3 Q1335.3,1249.3 1335.3,1255.5 Q1335.3,1259.2 1331.5,1260.0 Q1328.6,1261.0 1330.3,1264.0 Q1331.2,1268.8 1322,1268.8 Q1311.8,1268.3 1311.8,1259.0 Q1312,1249.3 1323,1249.3 Z" fill="#3a7ef0"/><circle cx="1320.4" cy="1255.0" r="1.8" fill="#0a1a40"/><circle cx="1325.5" cy="1254.0" r="1.5" fill="#0a1a40"/><circle cx="1330" cy="1255.0" r="1.1" fill="#0a1a40"/><circle cx="1316.5" cy="1258.8" r="1.6" fill="#0a1a40"/><circle cx="1324.4" cy="1262.5" r="2.3" fill="#0a1a40"/><rect x="1891.1" y="793.0" width="14.5" height="18.9" rx="2.6" fill="none" stroke="#9a9a9a" stroke-width="1.6"/><path d="M1894.4,799.6 H1896.2 L1897,796.3 L1898.4,802.2 L1899.6,797.6 L1900.2,799.6 H1902" fill="none" stroke="#9a9a9a" stroke-width="1.1" stroke-linejoin="round" stroke-linecap="round"/><path d="M1894.5,805.1 H1901.9 M1894.5,808.0 H1897.9" stroke="#9a9a9a" stroke-width="1.3" stroke-linecap="round"/><path d="M1890.7,874.3 H1906.2 M1889.2,881.2 H1904.6 M1896.3,869.1 L1892.7,886.7 M1902.6,869.1 L1899,886.7" stroke="#9a9a9a" stroke-width="1.7" stroke-linecap="round"/><rect x="1886" y="944.2" width="23.2" height="18.4" rx="3" fill="#c844e8"/><path d="M1886,953.4 H1909.2" stroke="#1e1e1e" stroke-width="1.8"/><path d="M1170,1509.5 H1177.5 L1187.2,1519.2 V1532.8 A3,3 0 0 1 1184.2,1535.8 H1170 A3,3 0 0 1 1167,1532.8 V1512.5 A3,3 0 0 1 1170,1509.5 Z" fill="none" stroke="#a8a8a8" stroke-width="1.6" stroke-linejoin="round"/><path d="M1177.2,1510 V1516.5 A2,2 0 0 0 1179.2,1518.5 H1186.8 M1171.5,1524.5 H1182.5 M1171.5,1529 H1182.5" fill="none" stroke="#a8a8a8" stroke-width="1.5"/><path d="M2235.6,1521.5 V1510 A3,3 0 0 1 2238.6,1507 H2245.8 L2256.2,1517.2 V1530.9 A3,3 0 0 1 2253.2,1533.9 H2243.6" fill="none" stroke="#fff" stroke-width="1.8" stroke-linejoin="round"/><path d="M2245.6,1507.4 V1514.6 A2,2 0 0 0 2247.6,1516.6 H2255.8" fill="none" stroke="#fff" stroke-width="1.8"/><circle cx="2236.2" cy="1529.6" r="6.6" fill="#fff"/><path d="M2236.2,1526.3 V1532.9 M2232.9,1529.6 H2239.5" stroke="#c846e6" stroke-width="1.6" stroke-linecap="round"/></svg>
</body></html>
